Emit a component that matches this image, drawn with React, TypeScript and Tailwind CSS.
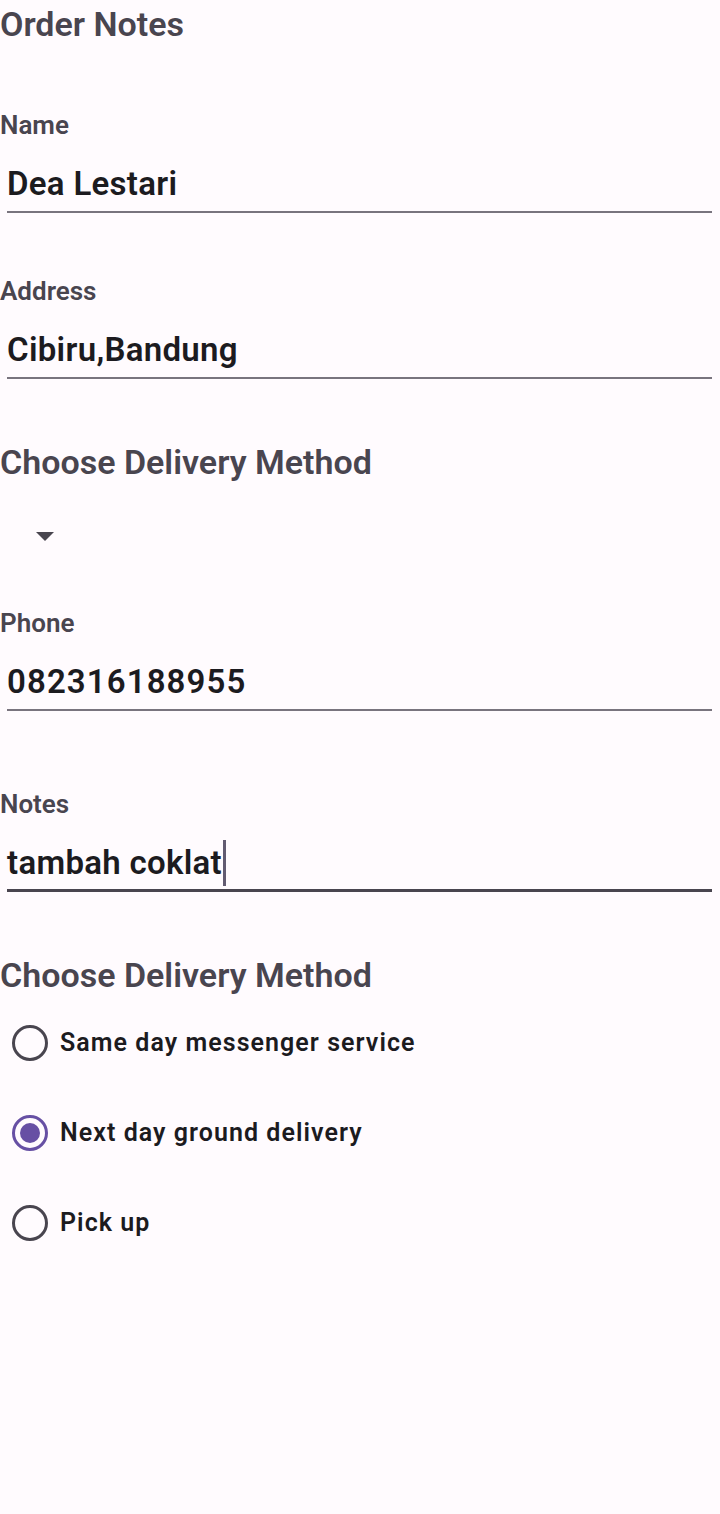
import React from 'react';

const font = { fontFamily: 'Roboto, "Noto Sans", sans-serif' };

const Field: React.FC<{ label: string; value: string; focused?: boolean; gap: string; track?: string }> = ({
  label,
  value,
  focused,
  gap,
  track = 'tracking-[0.3px]',
}) => (
  <div className={gap}>
    <p className="h-[32px] text-[26px] leading-[32px] font-semibold text-[#49454f]">{label}</p>
    <div
      className={`ml-[7px] mr-[8px] mt-[16px] flex h-[56px] items-center ${
        focused ? 'border-b-[3px] border-[#49454f]' : 'border-b-2 border-[#79747e]'
      }`}
    >
      <span className={`text-[33px] leading-[40px] font-semibold text-[#1c1b1f] ${track}`}>{value}</span>
      {focused && <span className="ml-[1px] h-[46px] w-[3px] bg-[#625b71]" />}
    </div>
  </div>
);

const Radio: React.FC<{ label: string; checked?: boolean }> = ({ label, checked }) => (
  <div className="flex h-[90px] items-center">
    <span
      className={`ml-[12px] flex h-[36px] w-[36px] items-center justify-center rounded-full border-[3px] ${
        checked ? 'border-[#6750a4]' : 'border-[#49454f]'
      }`}
    >
      {checked && <span className="h-[20px] w-[20px] rounded-full bg-[#6750a4]" />}
    </span>
    <span className="ml-[12px] text-[25px] font-semibold text-[#1c1b1f] tracking-[1.05px]">{label}</span>
  </div>
);

export default function App() {
  return (
    <div className="min-h-[1514px] w-[720px] bg-[#fffbfe]" style={font}>
      <h1 className="pt-[4px] text-[34px] leading-[40px] font-semibold text-[#49454f]">Order Notes</h1>

      <Field label="Name" value="Dea Lestari" gap="mt-[65px]" />
      <Field label="Address" value="Cibiru,Bandung" gap="mt-[62px]" />

      <h2 className="mt-[63px] text-[34px] leading-[40px] font-semibold text-[#49454f]">Choose Delivery Method</h2>
      <div className="mt-[40px] flex h-[30px] items-center pl-[36px]">
        <svg width="18" height="10" viewBox="0 0 18 10">
          <path d="M0 0 L18 0 L9 9 Z" fill="#49454f" />
        </svg>
      </div>

      <Field label="Phone" value="082316188955" gap="mt-[55px]" track="tracking-[1.1px]" />
      <Field label="Notes" value="tambah coklat" focused gap="mt-[77px]" />

      <h2 className="mt-[63px] text-[34px] leading-[40px] font-semibold text-[#49454f]">Choose Delivery Method</h2>
      <div className="mt-[3px]">
        <Radio label="Same day messenger service" />
        <Radio label="Next day ground delivery" checked />
        <Radio label="Pick up" />
      </div>
    </div>
  );
}
